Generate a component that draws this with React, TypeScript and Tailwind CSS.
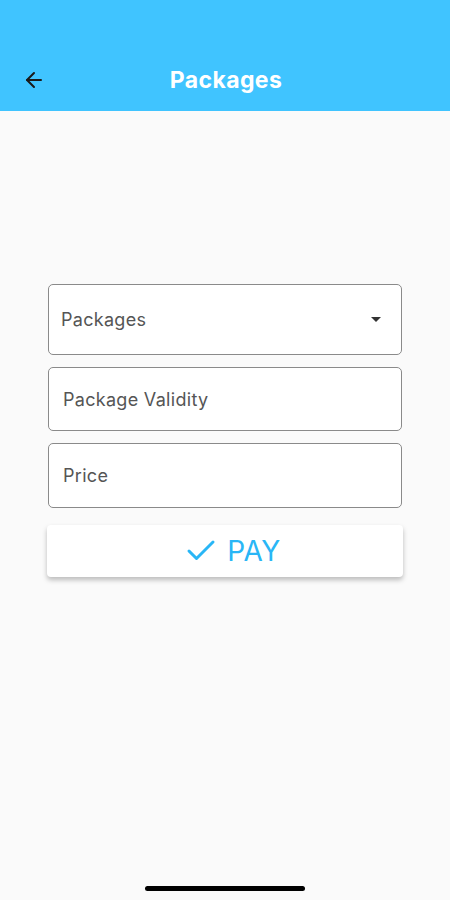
import { ArrowLeft, Check } from 'lucide-react'

export default function App() {
  return (
    <div
      className="relative flex h-[900px] w-[450px] flex-col bg-[#fafafa]"
      style={{ fontFamily: 'Inter, "Open Sans", sans-serif' }}
    >
      {/* App bar */}
      <div className="flex h-[111px] items-end bg-[#40c4ff] pb-[17px]">
        <div className="relative flex h-[28px] w-full items-center justify-center">
          <ArrowLeft className="absolute left-[22px] h-[24px] w-[24px] text-[#1a1a1a]" strokeWidth={2} />
          <span className="pl-[2px] text-[23px] font-bold tracking-[0.4px] text-white">Packages</span>
        </div>
      </div>

      {/* Form */}
      <div className="mt-[173px] flex flex-col px-[48px]">
        <div className="flex h-[71px] items-center justify-between rounded-[5px] border border-[#8a8a8a] bg-white pl-[12px] pr-[20px]">
          <span className="text-[18px] tracking-[0.3px] text-[#555]">Packages</span>
          <svg width="10" height="5" viewBox="0 0 10 5">
            <path d="M0 0 L10 0 L5 5 Z" fill="#333" />
          </svg>
        </div>
        <div className="mt-[12px] flex h-[64px] items-center rounded-[5px] border border-[#8a8a8a] bg-white pl-[14px]">
          <span className="text-[18px] tracking-[0.3px] text-[#555]">Package Validity</span>
        </div>
        <div className="mt-[12px] flex h-[65px] items-center rounded-[5px] border border-[#8a8a8a] bg-white pl-[14px]">
          <span className="text-[18px] tracking-[0.3px] text-[#555]">Price</span>
        </div>
        <button
          type="button"
          className="-mx-[1px] mt-[17px] flex h-[52px] items-center justify-center gap-[8px] rounded-[4px] bg-white pl-[14px] shadow-[0_3px_5px_rgba(0,0,0,0.25)]"
        >
          <Check className="h-[36px] w-[36px] text-[#29b6f6]" strokeWidth={2} />
          <span className="text-[28px] tracking-[0.5px] text-[#29b6f6]">PAY</span>
        </button>
      </div>

      {/* Home indicator */}
      <div className="absolute bottom-[9px] left-[145px] h-[5px] w-[160px] rounded-full bg-black" />
    </div>
  )
}
